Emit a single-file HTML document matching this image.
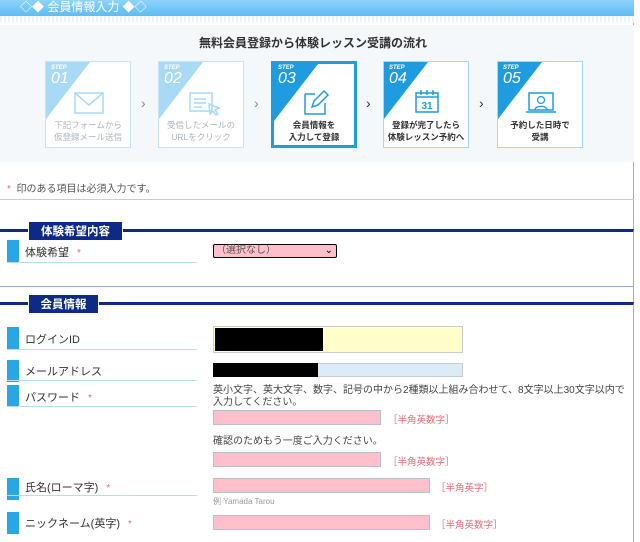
<!DOCTYPE html>
<html><head><meta charset="utf-8"><style>
*{margin:0;padding:0;box-sizing:border-box}
body{width:640px;height:531px;overflow:hidden;background:#fff;font-family:"Liberation Sans","Noto Sans CJK JP",sans-serif;position:relative;color:#333}
.a{position:absolute}
.hdr{left:0;top:0;width:634px;height:16px;background:linear-gradient(#8fd3fb,#5dbcf2);color:#fff;font-size:12px;line-height:15px;padding-left:20px}
.dots{left:0;top:16px;width:634px;height:7px;background:repeating-linear-gradient(90deg,#eef3f6 0 2px,#fff 2px 4px)}
.flow{left:0;top:25px;width:634px;height:137px;background:#f4f8fb}
.step{width:86px;height:87px;top:61px;background:#fff;border:1px solid #a6d8f3;overflow:hidden}
.step.on{border:3px solid #1f9ce0}
.tri{left:0;top:0;width:44px;height:57px;background:#1f9ce0;clip-path:polygon(0 0,100% 0,0 100%)}
.dim .tri{background:#a8d9f5}
.dim{border-color:#c6e6f7}
.sl{left:5px;top:3px;color:#fff;font-size:6px;font-style:italic;font-weight:bold}
.sn{left:5px;top:8px;color:#fff;font-size:16px;font-style:italic}
.on .sl{left:4px;top:1px}.on .sn{left:4px;top:6px}
.st{left:0;width:100%;top:57px;text-align:center;font-size:8.5px;line-height:12px;color:#333;font-weight:bold}
.dim .st{color:#aab5bd;font-weight:normal}
.on .st{top:55px}
.chev{font-size:14px;color:#888;top:95px}
.mk{left:7px;width:12px;height:22px;background:#2aa6e4}
.lb{left:25px;font-size:11px;color:#333}
.ul{left:7px;width:190px;height:1px;background:#b9dcf3}
.ast{color:#e36a7a;font-size:10px;margin-left:8px}
.pk{background:#ffc0cb;border:1px solid #b8bfc8}
.hint{font-size:9.5px;color:#e36a7a}
.txt{font-size:10px;color:#444;left:213px}
</style></head><body>
<div class="a" style="left:633px;top:0;width:1px;height:531px;background:#aab"></div>
<div class="a hdr">◇◆ 会員情報入力 ◆◇</div>
<div class="a dots"></div>
<div class="a flow"></div>
<div class="a" style="left:0;top:34px;width:634px;text-align:center;font-size:12px;font-weight:bold;color:#333;padding-right:8px">無料会員登録から体験レッスン受講の流れ</div>

<div class="a step dim" style="left:45px"><div class="a tri"></div><div class="a sl">STEP</div><div class="a sn">01</div>
<svg class="a" style="left:28px;top:30px" width="30" height="22"><rect x="1" y="1" width="28" height="20" fill="none" stroke="#a8d9f5" stroke-width="1.5"/><path d="M1 1L15 13L29 1" fill="none" stroke="#a8d9f5" stroke-width="1.5"/></svg>
<div class="a st">下記フォームから<br>仮登録メール送信</div></div>
<div class="a chev" style="left:141px">›</div>
<div class="a step dim" style="left:158px"><div class="a tri"></div><div class="a sl">STEP</div><div class="a sn">02</div>
<svg class="a" style="left:30px;top:30px" width="34" height="24"><rect x="1" y="1" width="22" height="18" fill="none" stroke="#a8d9f5" stroke-width="1.5"/><path d="M5 7h12M5 11h12M5 15h8M20 12l10 4-4 2 3 4-2 1-3-4-3 3z" fill="none" stroke="#a8d9f5" stroke-width="1.5"/></svg>
<div class="a st">受信したメールの<br>URLをクリック</div></div>
<div class="a chev" style="left:254px">›</div>
<div class="a step on" style="left:271px"><div class="a tri"></div><div class="a sl">STEP</div><div class="a sn">03</div>
<svg class="a" style="left:30px;top:25px" width="26" height="26"><path d="M1 5h10M1 5v20h20V14" fill="none" stroke="#1f9ce0" stroke-width="1.5"/><path d="M8 18l2-6L20 2l4 4-10 10z" fill="none" stroke="#1f9ce0" stroke-width="1.5"/></svg>
<div class="a st">会員情報を<br>入力して登録</div></div>
<div class="a chev" style="left:366px;color:#333">›</div>
<div class="a step" style="left:383px"><div class="a tri"></div><div class="a sl">STEP</div><div class="a sn">04</div>
<svg class="a" style="left:31px;top:27px" width="24" height="24"><rect x="1" y="4" width="22" height="19" fill="#fff" stroke="#1f9ce0" stroke-width="1.5"/><path d="M1 8h22M6 1v5M12 1v5M18 1v5" stroke="#1f9ce0" stroke-width="1.5"/><text x="12" y="20" text-anchor="middle" font-size="10" font-weight="bold" fill="#1f9ce0" font-family="Liberation Sans">31</text></svg>
<div class="a st">登録が完了したら<br>体験レッスン予約へ</div></div>
<div class="a chev" style="left:479px;color:#333">›</div>
<div class="a step" style="left:497px"><div class="a tri"></div><div class="a sl">STEP</div><div class="a sn">05</div>
<svg class="a" style="left:27px;top:30px" width="32" height="22"><rect x="4" y="1" width="24" height="17" fill="none" stroke="#1f9ce0" stroke-width="1.5"/><path d="M1 20h30" stroke="#1f9ce0" stroke-width="1.5"/><circle cx="16" cy="8" r="3.5" fill="none" stroke="#1f9ce0" stroke-width="1.3"/><path d="M10 18c0-5 12-5 12 0" fill="none" stroke="#1f9ce0" stroke-width="1.3"/></svg>
<div class="a st">予約した日時で<br>受講</div></div>

<div class="a" style="left:7px;top:180px;font-size:10px;color:#555"><span style="color:#e36a7a">*</span>&nbsp; 印のある項目は必須入力です。</div>
<div class="a" style="left:0;top:199px;width:634px;height:1px;background:#ccc"></div>

<div class="a" style="left:0;top:229px;width:634px;height:58px;border-top:3px solid #0d2a86;border-bottom:1px solid #9aaccc;border-right:1px solid #9aaccc"></div>
<div class="a" style="left:28px;top:221px;width:95px;height:20px;background:#0d2a86;color:#fff;font-weight:bold;font-size:11.5px;line-height:20px;text-align:center;border:1px solid #fff">体験希望内容</div>
<div class="a mk" style="top:240px"></div><div class="a lb" style="top:244px">体験希望<span class="ast">*</span></div>
<div class="a ul" style="top:262px"></div>
<div class="a pk" style="left:213px;top:244px;width:124px;height:14px;border:1px solid #000;border-radius:2px;font-size:10px;line-height:12px;color:#555;padding-left:2px">（選択なし）<span style="position:absolute;right:3px;top:0;color:#000">⌄</span></div>

<div class="a" style="left:0;top:302px;width:634px;height:240px;border-top:3px solid #0d2a86;border-right:1px solid #9aaccc"></div>
<div class="a" style="left:28px;top:294px;width:71px;height:20px;background:#0d2a86;color:#fff;font-weight:bold;font-size:11.5px;line-height:20px;text-align:center;border:1px solid #fff">会員情報</div>

<div class="a mk" style="top:327px"></div><div class="a lb" style="top:331px">ログインID</div><div class="a ul" style="top:349px"></div>
<div class="a" style="left:213px;top:326px;width:250px;height:27px;background:#ffffcc;border:1px solid #ccc"></div>
<div class="a" style="left:215px;top:328px;width:108px;height:23px;background:#000"></div>

<div class="a mk" style="top:360px"></div><div class="a lb" style="top:363px">メールアドレス</div><div class="a ul" style="top:380px"></div>
<div class="a" style="left:213px;top:363px;width:250px;height:14px;background:#dcebf8;border:1px solid #ccc"></div>
<div class="a" style="left:213px;top:363px;width:105px;height:14px;background:#000"></div>

<div class="a mk" style="top:385px"></div><div class="a lb" style="top:389px">パスワード<span class="ast">*</span></div><div class="a ul" style="top:406px"></div>
<div class="a txt" style="top:385px;line-height:12px">英小文字、英大文字、数字、記号の中から2種類以上組み合わせて、8文字以上30文字以内で<br>入力してください。</div>
<div class="a pk" style="left:213px;top:410px;width:168px;height:15px"></div><div class="a hint" style="left:388px;top:412px">［半角英数字］</div>
<div class="a txt" style="top:432px">確認のためもう一度ご入力ください。</div>
<div class="a pk" style="left:213px;top:452px;width:168px;height:15px"></div><div class="a hint" style="left:388px;top:454px">［半角英数字］</div>

<div class="a mk" style="top:478px"></div><div class="a lb" style="top:479px">氏名(ローマ字)<span class="ast">*</span></div><div class="a ul" style="top:495px"></div>
<div class="a pk" style="left:213px;top:478px;width:217px;height:15px"></div><div class="a hint" style="left:436px;top:480px">［半角英字］</div>
<div class="a" style="left:213px;top:496px;font-size:8px;color:#999">例 Yamada Tarou</div>

<div class="a mk" style="top:512px"></div><div class="a lb" style="top:515px">ニックネーム(英字)<span class="ast">*</span></div>
<div class="a pk" style="left:213px;top:515px;width:217px;height:15px"></div><div class="a hint" style="left:436px;top:517px">［半角英数字］</div>
</body></html>
